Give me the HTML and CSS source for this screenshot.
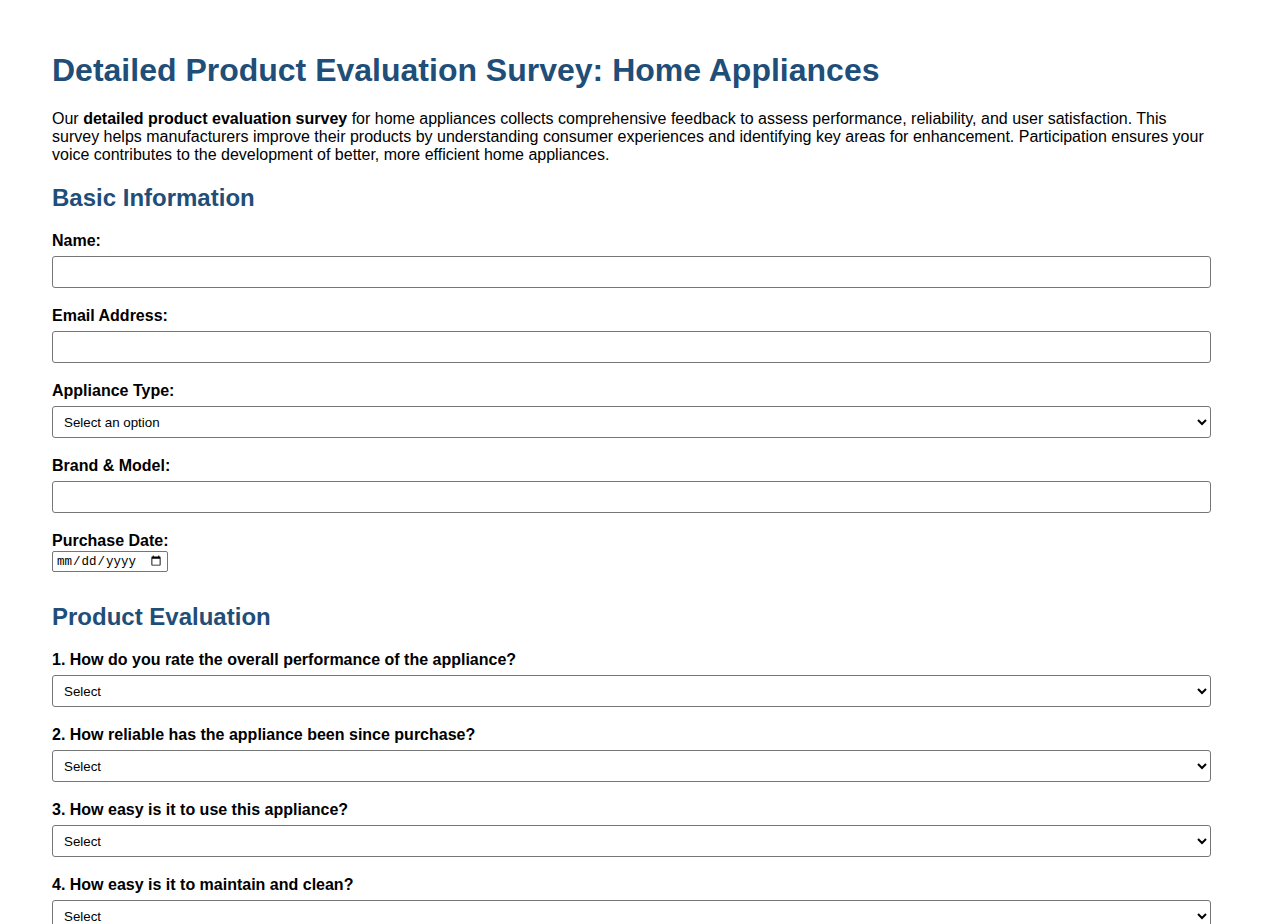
FILE: index.html
```html
<!DOCTYPE html>
<html lang="en">
<head>
<meta charset="utf-8">
<title>Detailed Product Evaluation Survey: Home Appliances</title>
<link rel="stylesheet" href="styles.css">
</head>
<body>
<div class="container">
  <h1>Detailed Product Evaluation Survey: Home Appliances</h1>
  <p class="intro">Our <strong>detailed product evaluation survey</strong> for home appliances collects comprehensive feedback to assess performance, reliability, and user satisfaction. This survey helps manufacturers improve their products by understanding consumer experiences and identifying key areas for enhancement. Participation ensures your voice contributes to the development of better, more efficient home appliances.</p>

  <form>
    <section class="section">
      <h2>Basic Information</h2>
      <div class="field">
        <label for="name">Name:</label>
        <input class="control" type="text" id="name">
      </div>
      <div class="field">
        <label for="email">Email Address:</label>
        <input class="control" type="email" id="email">
      </div>
      <div class="field">
        <label for="type">Appliance Type:</label>
        <select class="control control-select" id="type">
          <option>Select an option</option>
          <option>Refrigerator</option>
          <option>Washing Machine</option>
          <option>Dishwasher</option>
          <option>Microwave</option>
          <option>Oven</option>
        </select>
      </div>
      <div class="field">
        <label for="brand">Brand &amp; Model:</label>
        <input class="control" type="text" id="brand">
      </div>
      <div class="field">
        <label for="date">Purchase Date:</label>
        <input class="date" type="date" id="date">
      </div>
    </section>

    <section class="section">
      <h2>Product Evaluation</h2>
      <div class="field">
        <label for="q1">1. How do you rate the overall performance of the appliance?</label>
        <select class="control control-select" id="q1"><option>Select</option><option>Excellent</option><option>Good</option><option>Average</option><option>Poor</option></select>
      </div>
      <div class="field">
        <label for="q2">2. How reliable has the appliance been since purchase?</label>
        <select class="control control-select" id="q2"><option>Select</option><option>Very reliable</option><option>Reliable</option><option>Unreliable</option></select>
      </div>
      <div class="field">
        <label for="q3">3. How easy is it to use this appliance?</label>
        <select class="control control-select" id="q3"><option>Select</option><option>Very easy</option><option>Easy</option><option>Difficult</option></select>
      </div>
      <div class="field">
        <label for="q4">4. How easy is it to maintain and clean?</label>
        <select class="control control-select" id="q4"><option>Select</option><option>Very easy</option><option>Easy</option><option>Difficult</option></select>
      </div>
    </section>
  </form>
</div>
</body>
</html>
```

FILE: styles.css
```css
html, body {
  margin: 0;
  padding: 0;
  background: #ffffff;
}

body {
  font-family: "Liberation Sans", Arial, sans-serif;
  color: #000000;
  font-size: 16px;
}

.container {
  padding: 31px 52px;
}

h1 {
  color: #1f4e79;
  font-size: 32px;
  font-weight: bold;
  margin: 21px 0;
}

.intro {
  margin: 16px 0 20px;
}

h2 {
  color: #1f4e79;
  font-size: 24px;
  font-weight: bold;
  margin: 20px 0;
}

.section + .section {
  margin-top: 31px;
}

.field {
  margin-bottom: 19px;
}

.field label {
  display: block;
  font-weight: bold;
  line-height: 18px;
}

.control {
  display: block;
  box-sizing: border-box;
  width: 100%;
  height: 32px;
  margin-top: 6px;
  padding: 0 8px;
  border: 1px solid #767676;
  border-radius: 3px;
  background: #ffffff;
  color: #000000;
  font-family: "Liberation Sans", Arial, sans-serif;
  font-size: 13.33px;
}

.control-select {
  padding: 0 7px;
}

.date {
  display: block;
  box-sizing: border-box;
  width: 116px;
  height: 21px;
  margin: 1px 0 0;
  padding: 1px 3px;
  border: 1px solid #767676;
  border-radius: 2px;
  font-family: "Liberation Mono", monospace;
  font-size: 12.5px;
}
```
